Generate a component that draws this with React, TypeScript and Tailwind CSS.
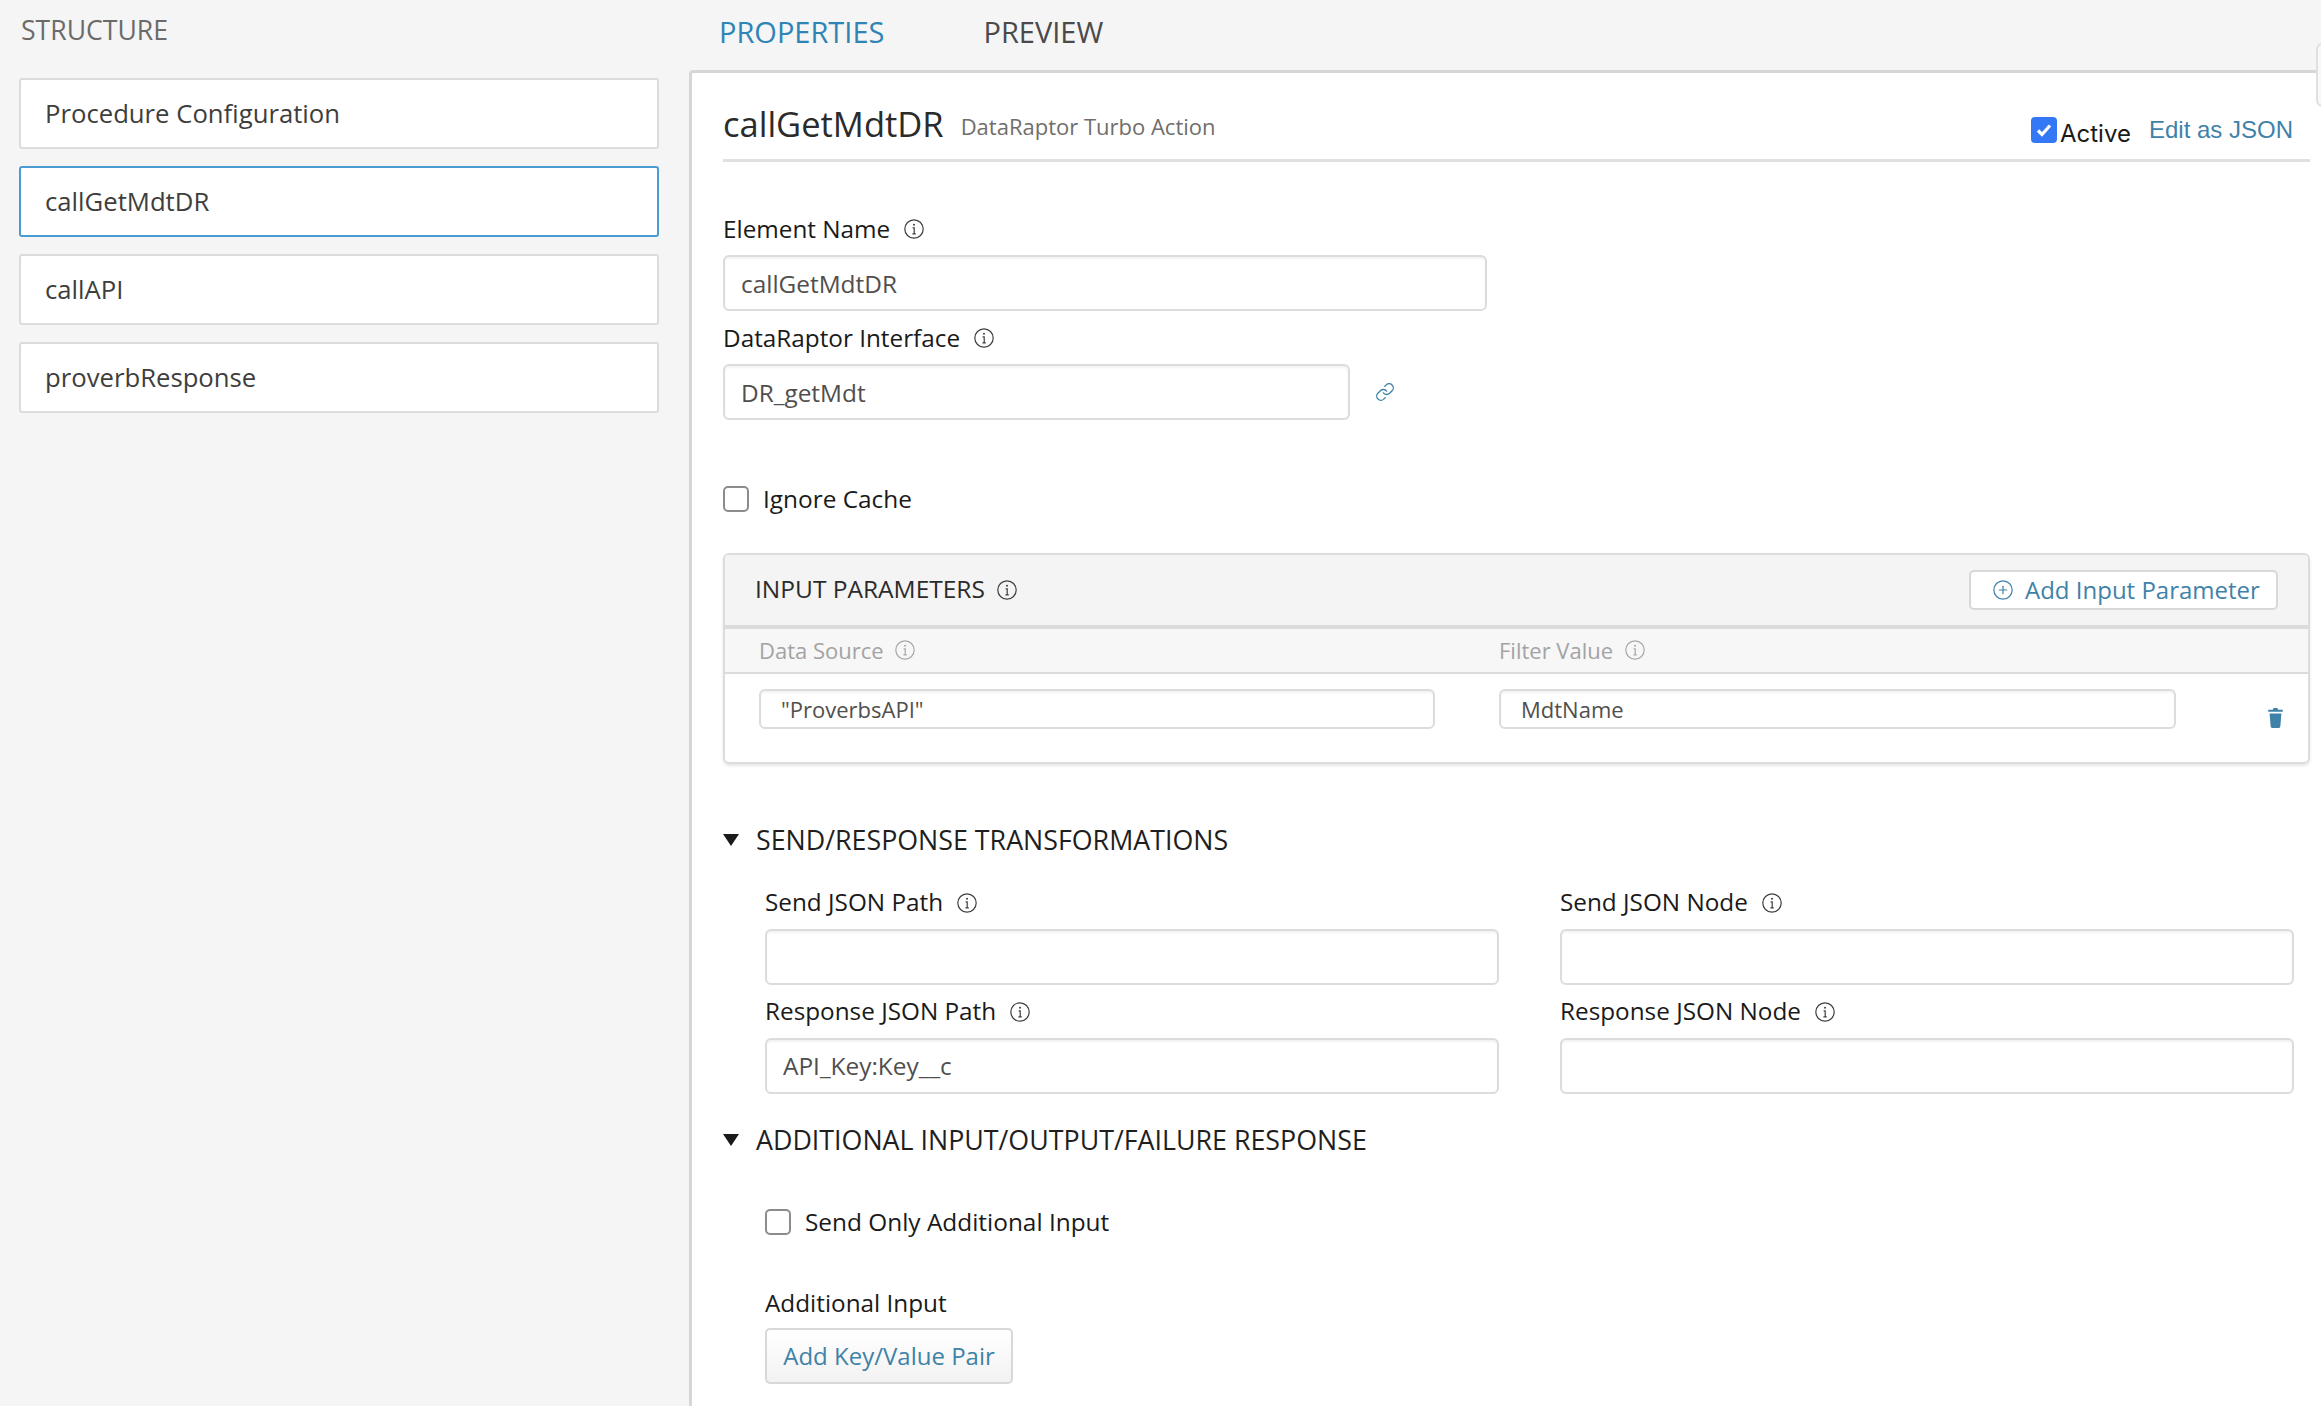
import { CirclePlus, Link } from "lucide-react";

const sans = "font-['Open_Sans','Noto_Sans',sans-serif]";
const inputCls = "block border-2 border-[#dcdcdc] rounded-[6px] bg-white text-[#514f4d] outline-none shadow-[inset_0_2px_2px_rgba(0,0,0,0.05)]";

function InfoIcon({ className = "text-[#3e3e3c]" }: { className?: string }) {
  return (
    <svg viewBox="0 0 20 20" className={`w-[20px] h-[20px] shrink-0 ${className}`} fill="none" stroke="currentColor" strokeWidth="1.2">
      <circle cx="10" cy="10" r="9.2" />
      <circle cx="10" cy="5.8" r="1" fill="currentColor" stroke="none" />
      <path d="M8.6 8.8h1.6v6M8.4 14.8h3.4" />
    </svg>
  );
}

function Triangle() {
  return (
    <svg viewBox="0 0 16 12" className="w-[16px] h-[12px] shrink-0" fill="#1a1a1a">
      <path d="M0 0h16L8 12z" />
    </svg>
  );
}

function Field({ label, value, width }: { label: string; value?: string; width: string }) {
  return (
    <div className={width}>
      <div className="flex items-center gap-[14px] h-[36px] text-[24.3px] text-[#1a1a1a]">
        <span>{label}</span>
        <InfoIcon />
      </div>
      <input readOnly value={value ?? ""} className={`${inputCls} mt-[8px] w-full h-[56px] px-[16px] text-[24.4px]`} />
    </div>
  );
}

function CheckRow({ label }: { label: string }) {
  return (
    <label className="flex items-center gap-[14px] text-[24.4px] text-[#1a1a1a]">
      <span className="w-[26px] h-[26px] rounded-[5px] border-2 border-[#8c8c8c] bg-white" />
      {label}
    </label>
  );
}

export default function App() {
  const steps = ["Procedure Configuration", "callGetMdtDR", "callAPI", "proverbResponse"];

  return (
    <div className={`${sans} relative flex w-[2321px] h-[1406px] overflow-hidden bg-[#f5f5f5]`}>
      <aside className="w-[689px] shrink-0 pl-[19px] pr-[30px]">
        <div className="h-[78px] pt-[14px] pl-[2px] text-[26.6px] leading-[32px] text-[#6b6b6b]">STRUCTURE</div>
        <div className="flex flex-col gap-[17px]">
          {steps.map((s, i) => (
            <div
              key={s}
              className={`h-[71px] flex items-center pl-[24px] pt-[2px] bg-white rounded-[3px] border-2 text-[25.7px] text-[#3e3e3c] ${i === 1 ? "border-[#4b9cd3]" : "border-[#dcdcdc]"}`}
            >
              {s}
            </div>
          ))}
        </div>
      </aside>

      <main className="flex-1 flex flex-col min-w-0">
        <div className="h-[70px] shrink-0 flex items-start pt-[14px] pl-[30px] gap-[99px] text-[29px] leading-[36px]">
          <span className="text-[#2e84b5]">PROPERTIES</span>
          <span className="text-[#4a4a4a]">PREVIEW</span>
        </div>

        <div className="flex-1 bg-white border-t-[3px] border-l-[3px] border-[#d6d6d6] rounded-tl-[4px] pl-[31px] pr-[11px]">
          <div className="flex items-center h-[89px] pt-[15px] border-b-[3px] border-[#e0e0e0]">
            <span className="text-[34.5px] text-[#2b2b2b]">callGetMdtDR</span>
            <span className="ml-[17px] pt-[6px] text-[22px] text-[#706e6b]">DataRaptor Turbo Action</span>
            <span className="ml-auto flex items-center gap-[3px] pt-[12px] font-['Inter',sans-serif] text-[24px] text-[#1a1a1a]">
              <span className="w-[26px] h-[26px] rounded-[4px] bg-[#3478f6] flex items-center justify-center">
                <svg viewBox="0 0 20 20" className="w-[20px] h-[20px]" fill="none" stroke="#fff" strokeWidth="3.2">
                  <path d="M4 10.5l4 4 8-9" />
                </svg>
              </span>
              <span className="pt-[8px]">Active</span>
            </span>
            <span className="ml-[18px] mr-[17px] pt-[12px] font-['Liberation_Sans',sans-serif] text-[24px] text-[#3f82a8]">Edit as JSON</span>
          </div>

          <div className="pt-[49px]">
            <Field label="Element Name" value="callGetMdtDR" width="w-[764px]" />
            <div className="flex items-end gap-[25px] mt-[9px]">
              <Field label="DataRaptor Interface" value="DR_getMdt" width="w-[627px]" />
              <Link className="w-[20px] h-[20px] mb-[18px] text-[#3f82a8]" strokeWidth={1.6} />
            </div>
          </div>

          <div className="mt-[61px]">
            <CheckRow label="Ignore Cache" />
          </div>

          <div className="mt-[35px] border-2 border-[#dcdcdc] rounded-[6px] shadow-[0_2px_3px_rgba(0,0,0,0.1)] overflow-hidden">
            <div className="h-[74px] bg-[#f4f4f4] flex items-center pl-[30px] pr-[30px] border-b-[4px] border-[#dcdcdc]">
              <span className="text-[24.5px] text-[#2b2b2b]">INPUT PARAMETERS</span>
              <span className="ml-[12px]"><InfoIcon /></span>
              <button className="ml-auto w-[309px] h-[40px] flex items-center justify-start pl-[21px] gap-[11px] rounded-[5px] border-2 border-[#d8d8d8] bg-white text-[24px] text-[#3f82a8]">
                <CirclePlus className="w-[22px] h-[22px]" strokeWidth={1.3} />
                Add Input Parameter
              </button>
            </div>
            <div className="h-[45px] bg-[#f7f7f7] flex items-center border-b-2 border-[#dcdcdc] text-[22px] text-[#a3a3a3]">
              <div className="w-[774px] pl-[34px] flex items-center gap-[11px]">Data Source <InfoIcon className="text-[#a8a8a8]" /></div>
              <div className="flex items-center gap-[12px]">Filter Value <InfoIcon className="text-[#a8a8a8]" /></div>
            </div>
            <div className="h-[88px] flex items-start pt-[15px] pl-[34px]">
              <input readOnly value={'"ProverbsAPI"'} className={`${inputCls} w-[676px] h-[40px] px-[20px] text-[22px]`} />
              <input readOnly value="MdtName" className={`${inputCls} ml-[64px] w-[677px] h-[40px] px-[20px] text-[22px]`} />
              <svg viewBox="0 0 16 22" className="ml-[92px] mt-[19px] w-[15px] h-[20px]" fill="#3f82a8">
                <path d="M6 0h4l1 2h5v2H0V2h5zM1.5 6h13l-1.2 14.4a1.6 1.6 0 0 1-1.6 1.6H4.3a1.6 1.6 0 0 1-1.6-1.6z" />
              </svg>
            </div>
          </div>

          <div className="mt-[56px] flex items-center gap-[17px] h-[40px] text-[26.8px] text-[#1f1f1f]">
            <Triangle />
            SEND/RESPONSE TRANSFORMATIONS
          </div>
          <div className="pl-[42px] mt-[25px] grid grid-cols-[734px_734px] gap-x-[61px] gap-y-[9px]">
            <Field label="Send JSON Path" width="w-full" />
            <Field label="Send JSON Node" width="w-full" />
            <Field label="Response JSON Path" value="API_Key:Key__c" width="w-full" />
            <Field label="Response JSON Node" width="w-full" />
          </div>

          <div className="mt-[26px] flex items-center gap-[17px] h-[40px] text-[26.8px] text-[#1f1f1f]">
            <Triangle />
            ADDITIONAL INPUT/OUTPUT/FAILURE RESPONSE
          </div>
          <div className="pl-[42px] mt-[44px]">
            <CheckRow label="Send Only Additional Input" />
            <div className="mt-[45px] h-[36px] flex items-center text-[24.3px] text-[#1a1a1a]">Additional Input</div>
            <button className="mt-[7px] w-[248px] h-[56px] rounded-[5px] border-2 border-[#d8d8d8] bg-gradient-to-b from-white to-[#f2f2f2] text-[24px] text-[#3f82a8]">
              Add Key/Value Pair
            </button>
          </div>
        </div>
      </main>

      <div className="absolute right-[-8px] top-[43px] w-[13px] h-[64px] rounded-[8px] border-2 border-[#e0e0e0] bg-[#f8f8f8]" />
    </div>
  );
}
